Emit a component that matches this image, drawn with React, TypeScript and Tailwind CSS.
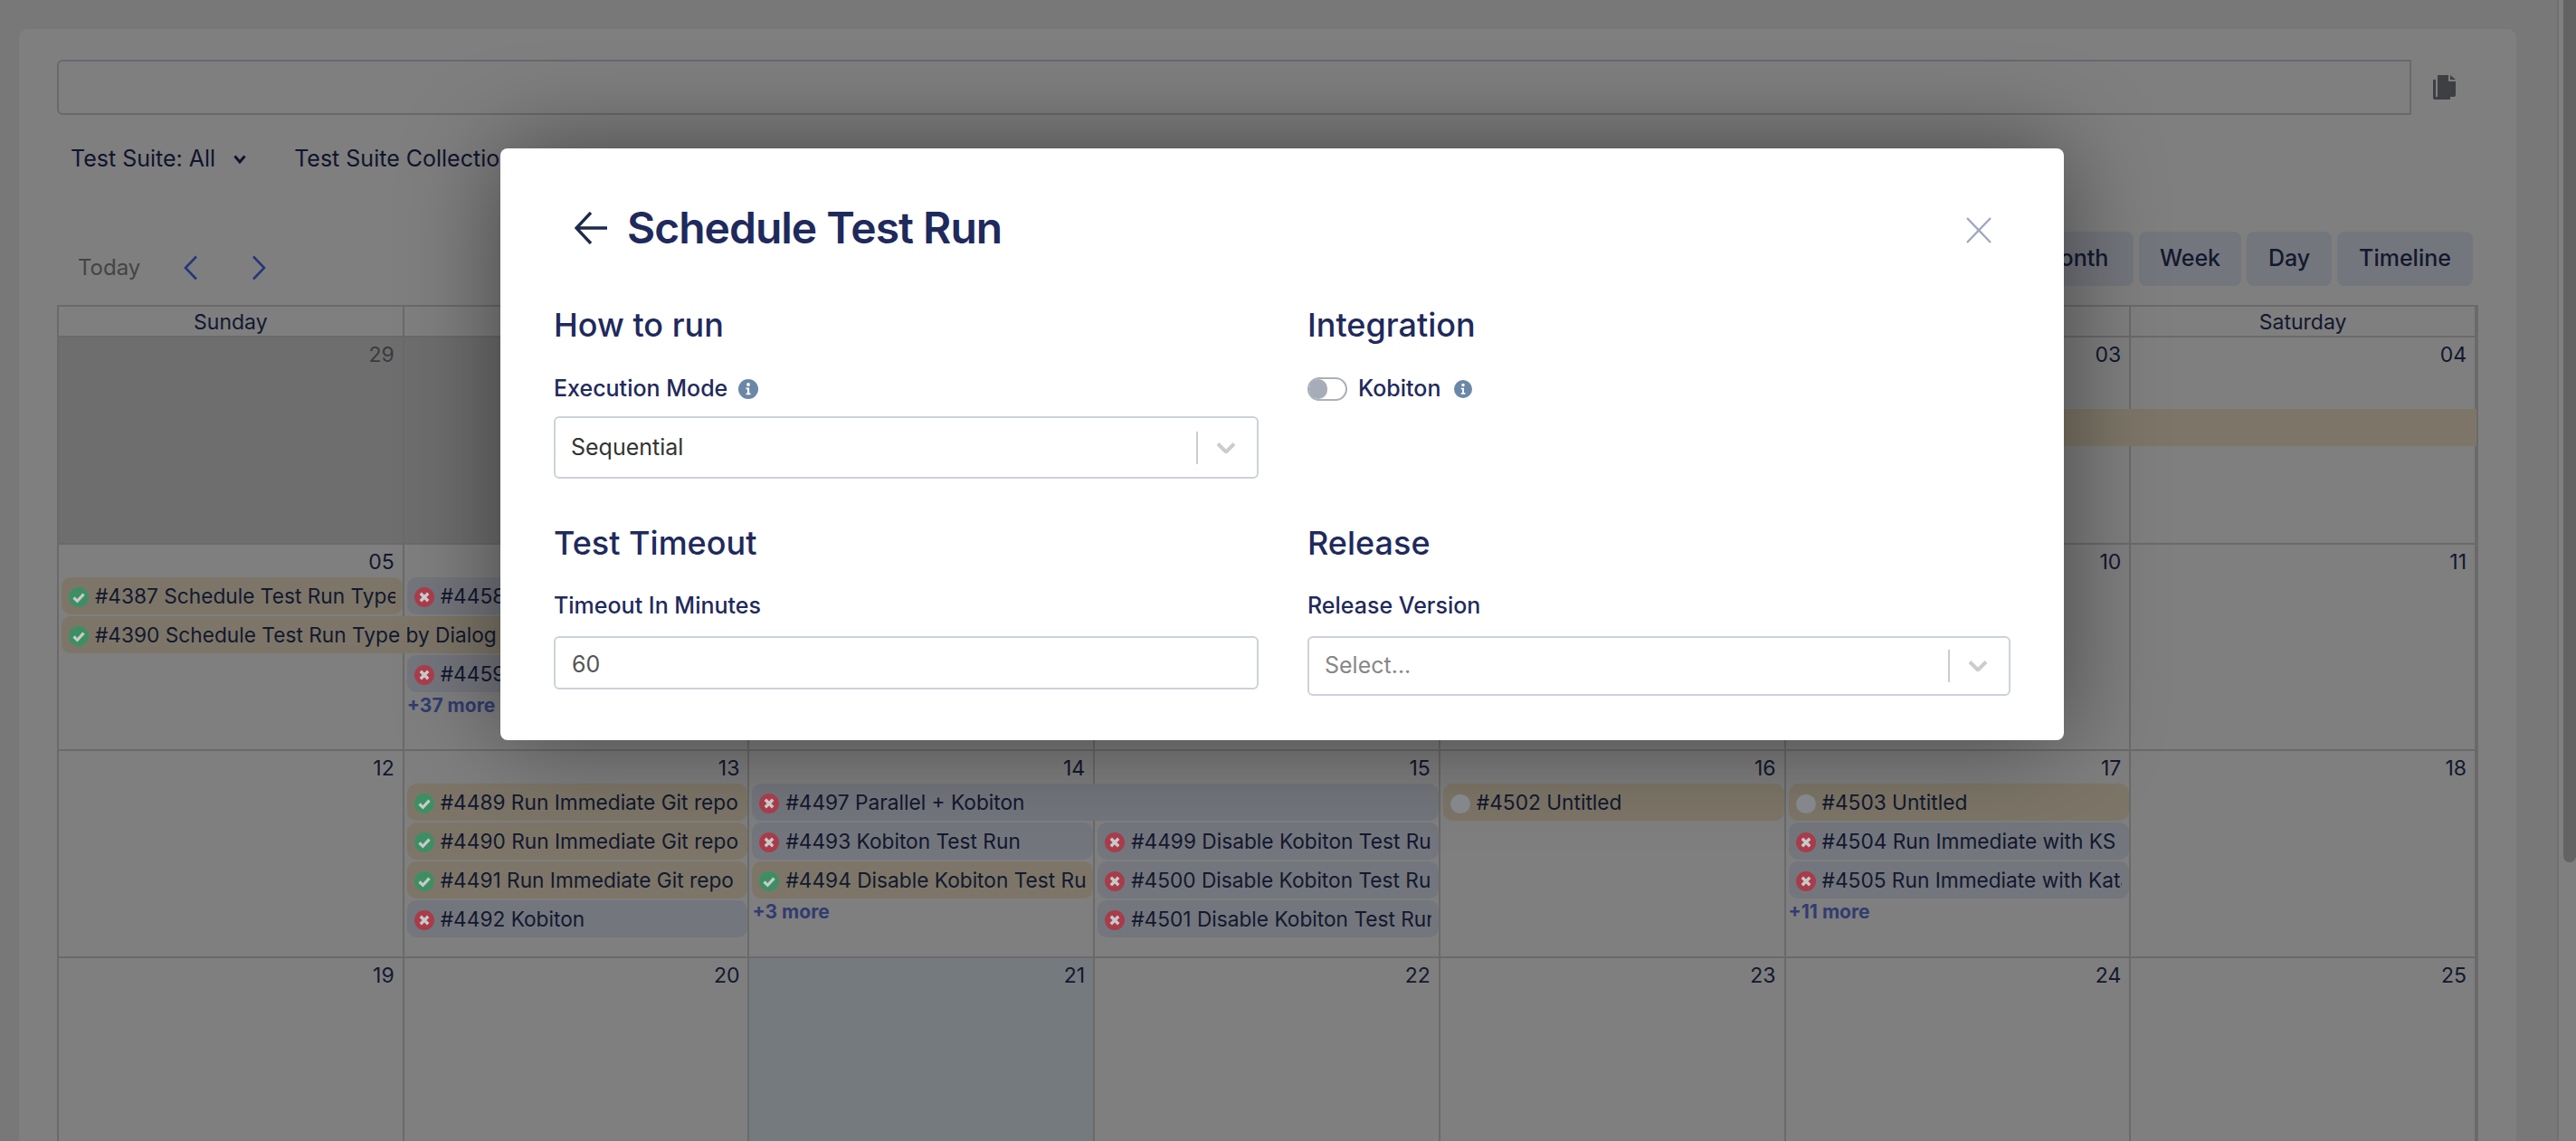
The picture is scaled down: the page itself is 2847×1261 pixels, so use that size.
type Status = "pass" | "fail" | "none"

type EventItem = {
  label: string
  status: Status
  tone: "yellow" | "blue"
  place: string
}

type Week = {
  days: string[]
  muted?: number[]
  today?: number
  events: EventItem[]
  more: { label: string; place: string }[]
}

const weeks: Week[] = [
  {
    days: ["29", "30", "31", "01", "02", "03", "04"],
    muted: [0, 1, 2],
    events: [
      { label: "", status: "none", tone: "yellow", place: "col-start-4 col-span-4 row-start-2 mr-0! rounded-r-none!" },
    ],
    more: [],
  },
  {
    days: ["05", "06", "07", "08", "09", "10", "11"],
    events: [
      { label: "#4387 Schedule Test Run Type by Dialog", status: "pass", tone: "yellow", place: "col-start-1 row-start-1" },
      { label: "#4458 Run Immediate", status: "fail", tone: "blue", place: "col-start-2 row-start-1" },
      { label: "#4390 Schedule Test Run Type by Dialog", status: "pass", tone: "yellow", place: "col-start-1 col-span-2 row-start-2" },
      { label: "#4459 Run Immediate", status: "fail", tone: "blue", place: "col-start-2 row-start-3" },
    ],
    more: [{ label: "+37 more", place: "col-start-2 row-start-4" }],
  },
  {
    days: ["12", "13", "14", "15", "16", "17", "18"],
    events: [
      { label: "#4489 Run Immediate Git repo", status: "pass", tone: "yellow", place: "col-start-2 row-start-1" },
      { label: "#4490 Run Immediate Git repo", status: "pass", tone: "yellow", place: "col-start-2 row-start-2" },
      { label: "#4491 Run Immediate Git repo", status: "pass", tone: "yellow", place: "col-start-2 row-start-3" },
      { label: "#4492 Kobiton", status: "fail", tone: "blue", place: "col-start-2 row-start-4" },
      { label: "#4497 Parallel + Kobiton", status: "fail", tone: "blue", place: "col-start-3 col-span-2 row-start-1" },
      { label: "#4493 Kobiton Test Run", status: "fail", tone: "blue", place: "col-start-3 row-start-2" },
      { label: "#4494 Disable Kobiton Test Run", status: "pass", tone: "yellow", place: "col-start-3 row-start-3" },
      { label: "#4499 Disable Kobiton Test Run", status: "fail", tone: "blue", place: "col-start-4 row-start-2" },
      { label: "#4500 Disable Kobiton Test Run", status: "fail", tone: "blue", place: "col-start-4 row-start-3" },
      { label: "#4501 Disable Kobiton Test Run", status: "fail", tone: "blue", place: "col-start-4 row-start-4" },
      { label: "#4502 Untitled", status: "none", tone: "yellow", place: "col-start-5 row-start-1" },
      { label: "#4503 Untitled", status: "none", tone: "yellow", place: "col-start-6 row-start-1" },
      { label: "#4504 Run Immediate with KS", status: "fail", tone: "blue", place: "col-start-6 row-start-2" },
      { label: "#4505 Run Immediate with Katalon", status: "fail", tone: "blue", place: "col-start-6 row-start-3" },
    ],
    more: [
      { label: "+3 more", place: "col-start-3 row-start-4" },
      { label: "+11 more", place: "col-start-6 row-start-4" },
    ],
  },
  {
    days: ["19", "20", "21", "22", "23", "24", "25"],
    today: 2,
    events: [],
    more: [],
  },
]

const dayNames = ["Sunday", "Monday", "Tuesday", "Wednesday", "Thursday", "Friday", "Saturday"]

const views = [
  { name: "Month", width: "w-[132px]" },
  { name: "Week", width: "w-[113px]" },
  { name: "Day", width: "w-[94px]" },
  { name: "Timeline", width: "w-[150px]" },
]

const StatusIcon = ({ status }: { status: Status }) => {
  if (status === "none") {
    return <span className="relative z-20 mt-[3px] mr-[7px] h-[21px] w-[22px] shrink-0 rounded-full bg-[#84878b]" />
  }
  return (
    <svg viewBox="0 0 22 22" className="relative z-20 mt-[3px] mr-[7px] h-[22px] w-[22px] shrink-0">
      <circle cx="11" cy="11" r="11" fill={status === "pass" ? "#3d8f63" : "#a83c4a"} />
      {status === "pass" ? (
        <path d="M5.5 11.5l3.9 3.8L16.5 7.6" fill="none" stroke="#c9c9c9" strokeWidth="3.2" />
      ) : (
        <path d="M6.8 6.8l8.4 8.4M15.2 6.8l-8.4 8.4" fill="none" stroke="#c9c9c9" strokeWidth="3.4" />
      )}
    </svg>
  )
}

const InfoIcon = ({ className }: { className: string }) => (
  <svg viewBox="0 0 22 22" className={className}>
    <circle cx="11" cy="11" r="11" fill="#6b87a8" />
    <circle cx="11" cy="6" r="1.9" fill="#fff" />
    <path d="M8.5 9.5h3.6v6h1.5v1.7H8.6v-1.7h1.4v-4.3H8.5z" fill="#fff" />
  </svg>
)

const SelectBox = ({ value, muted }: { value: string; muted?: boolean }) => (
  <div className="flex h-full items-center rounded-[6px] border-2 border-[#ccd2d9] bg-white pl-[17px]">
    <span className={muted ? "flex-1 text-[25px] text-[#888888]" : "flex-1 text-[25px] text-[#333333]"}>{value}</span>
    <span className="h-[36px] w-[2px] bg-[#cccccc]" />
    <svg viewBox="0 0 22 12" className="mr-[23px] ml-[20px] h-[12px] w-[22px]">
      <path d="M2 1.5l9 9 9-9" fill="none" stroke="#cccccc" strokeWidth="4" />
    </svg>
  </div>
)

const CalendarWeek = ({ week }: { week: Week }) => (
  <div className="relative h-[228.5px] border-b-2 border-[#d4d4d4]">
    <div className="absolute inset-0 grid grid-cols-7">
      {week.days.map((day, i) => (
        <div
          key={i}
          className={
            "border-r-2 border-[#d4d4d4] pt-[5px] pr-[9px] text-right text-[23px] leading-[28px] " +
            (week.muted?.includes(i) ? "bg-[#dcdcdc] text-[#777777] " : "text-[#27335f] ") +
            (week.today === i ? "bg-[#e8f4fc]" : "")
          }
        >
          {day}
        </div>
      ))}
    </div>
    <div className="relative grid grid-cols-7 auto-rows-[43px] pt-[36px]">
      {week.events.map((ev) => (
        <div
          key={ev.place}
          className={
            "mr-[2px] ml-[3px] flex h-[41px] items-center overflow-hidden rounded-[10px] pl-[8px] text-[22.7px] whitespace-nowrap text-[#27335f] " +
            (ev.tone === "yellow" ? "bg-[#faecd0] " : "bg-[#e8ecfa] ") +
            ev.place
          }
        >
          {ev.label && <StatusIcon status={ev.status} />}
          <span className="mr-[8px] overflow-hidden pt-[2px]">{ev.label}</span>
        </div>
      ))}
      {week.more.map((m) => (
        <div key={m.place} className={"ml-[3px] h-[26px] text-[21px] leading-[26px] font-bold text-[#6478e0] " + m.place}>
          {m.label}
        </div>
      ))}
    </div>
  </div>
)

export default function App() {
  return (
    <div className="relative flex h-screen overflow-hidden bg-[#f1f1f1] font-['Inter',sans-serif] text-[#1f2a5c]">
      <main className="min-w-0 flex-1 pt-[32px] pr-[45px] pl-[21px]">
        <div className="h-[1300px] rounded-[10px] bg-white px-[42px] pt-[34px]">
          <div className="flex items-center">
            <div className="h-[61px] w-[2602px] rounded-l-[6px] border-2 border-[#ced4db]" />
            <svg viewBox="0 0 25 27" className="ml-[24px] h-[27px] w-[25px]">
              <path d="M0 5h3v19h16v3H2a2 2 0 0 1-2-2z" fill="#7b7f86" />
              <path d="M5 0h12v7h8v15a2 2 0 0 1-2 2H5z" fill="#7b7f86" />
              <path d="M19 0l6 5h-6z" fill="#7b7f86" />
            </svg>
          </div>

          <div className="mt-[30px] flex h-[36px] items-center pl-[15px] text-[25px] leading-[36px]">
            <span>Test Suite: All</span>
            <svg viewBox="0 0 14 10" className="mt-[2px] ml-[20px] h-[10px] w-[14px]">
              <path d="M1.5 1.5L7 8l5.5-6.5" fill="none" stroke="#1f2a5c" strokeWidth="3" />
            </svg>
            <span className="ml-[53px]">Test Suite Collection: All</span>
          </div>

          <div className="mt-[63px] flex h-[60px] items-center">
            <span className="mt-[20px] ml-[23px] text-[24px] text-[#888888]">Today</span>
            <svg viewBox="0 0 16 28" className="mt-[20px] ml-[48px] h-[28px] w-[16px]">
              <path d="M14 1.5L2 14l12 12.5" fill="none" stroke="#4f6cf0" strokeWidth="2.6" />
            </svg>
            <svg viewBox="0 0 16 28" className="mt-[20px] ml-[59px] h-[28px] w-[16px]">
              <path d="M2 1.5L14 14 2 26.5" fill="none" stroke="#4f6cf0" strokeWidth="2.6" />
            </svg>
            <div className="mr-[6px] ml-auto flex gap-[6px] text-[25px] font-medium">
              {views.map((view) => (
                <button key={view.name} className={"h-[60px] rounded-[8px] bg-[#e8ecfa] text-[#27335f] " + view.width}>
                  {view.name}
                </button>
              ))}
            </div>
          </div>

          <div className="mt-[21px] w-[2676px] border-2 border-b-0 border-[#d4d4d4]">
            <div className="grid h-[34px] grid-cols-7 border-b-2 border-[#d4d4d4]">
              {dayNames.map((name) => (
                <div key={name} className="border-r-2 border-[#d4d4d4] text-center text-[23px] leading-[34px] text-[#27335f]">
                  {name}
                </div>
              ))}
            </div>
            {weeks.map((week) => (
              <CalendarWeek key={week.days[0]} week={week} />
            ))}
          </div>
        </div>
      </main>

      <aside className="w-[21px] shrink-0 border-l-2 border-[#dedede] bg-white pl-[5px]">
        <div className="h-[953px] rounded-b-[7px] bg-[#c6c6c6]" />
      </aside>

      <div className="absolute inset-0 z-10 bg-black/50 pt-[164px] pl-[553px]">
        <div className="h-[654px] w-[1728px] rounded-[8px] bg-white px-[59px] shadow-[0_0_110px_rgba(0,0,0,0.45)]">
          <div className="flex h-[126px] items-center pt-[50px]">
            <svg viewBox="0 0 36 36" className="ml-[23px] h-[36px] w-[36px]">
              <path d="M18 1L2 18l16 17M2 18h34" fill="none" stroke="#1e2a4a" strokeWidth="3.4" />
            </svg>
            <h1 className="ml-[22px] text-[48px] leading-none font-semibold tracking-[-1px]">Schedule Test Run</h1>
            <svg viewBox="0 0 28 29" className="mt-[4px] mr-[21px] ml-auto h-[29px] w-[28px]">
              <path d="M1 1l26 27M27 1L1 28" fill="none" stroke="#a0a8c0" strokeWidth="2.4" />
            </svg>
          </div>

          <div className="grid grid-cols-[779px_777px] gap-x-[54px]">
            <section className="h-[288px] pt-[47px]">
              <h2 className="text-[36px] leading-[44px] font-medium">How to run</h2>
              <div className="mt-[34px] flex h-[30px] items-center gap-[12px] text-[25px] font-medium">
                Execution Mode
                <InfoIcon className="h-[22px] w-[22px]" />
              </div>
              <div className="mt-[15px] h-[69px]">
                <SelectBox value="Sequential" />
              </div>
            </section>
            <section className="h-[288px] pt-[47px]">
              <h2 className="text-[36px] leading-[44px] font-medium">Integration</h2>
              <div className="mt-[34px] flex h-[30px] items-center text-[25px] font-medium">
                <span className="mr-[12px] flex h-[26px] w-[44px] items-center rounded-full border-2 border-[#aab0ba]">
                  <span className="h-[22px] w-[20px] rounded-full bg-[#a6adb8]" />
                </span>
                Kobiton
                <InfoIcon className="ml-[15px] h-[20px] w-[20px]" />
              </div>
            </section>
            <section>
              <h2 className="text-[36px] leading-[44px] font-medium">Test Timeout</h2>
              <div className="mt-[32px] h-[30px] text-[25px] leading-[30px] font-medium">Timeout In Minutes</div>
              <input
                readOnly
                value="60"
                className="mt-[19px] h-[59px] w-full rounded-[6px] border-2 border-[#ccd2d9] pt-[2px] pl-[18px] text-[25px] text-[#555555] outline-none"
              />
            </section>
            <section>
              <h2 className="text-[36px] leading-[44px] font-medium">Release</h2>
              <div className="mt-[32px] h-[30px] text-[25px] leading-[30px] font-medium">Release Version</div>
              <div className="mt-[19px] h-[66px]">
                <SelectBox value="Select..." muted />
              </div>
            </section>
          </div>
        </div>
      </div>
    </div>
  )
}
